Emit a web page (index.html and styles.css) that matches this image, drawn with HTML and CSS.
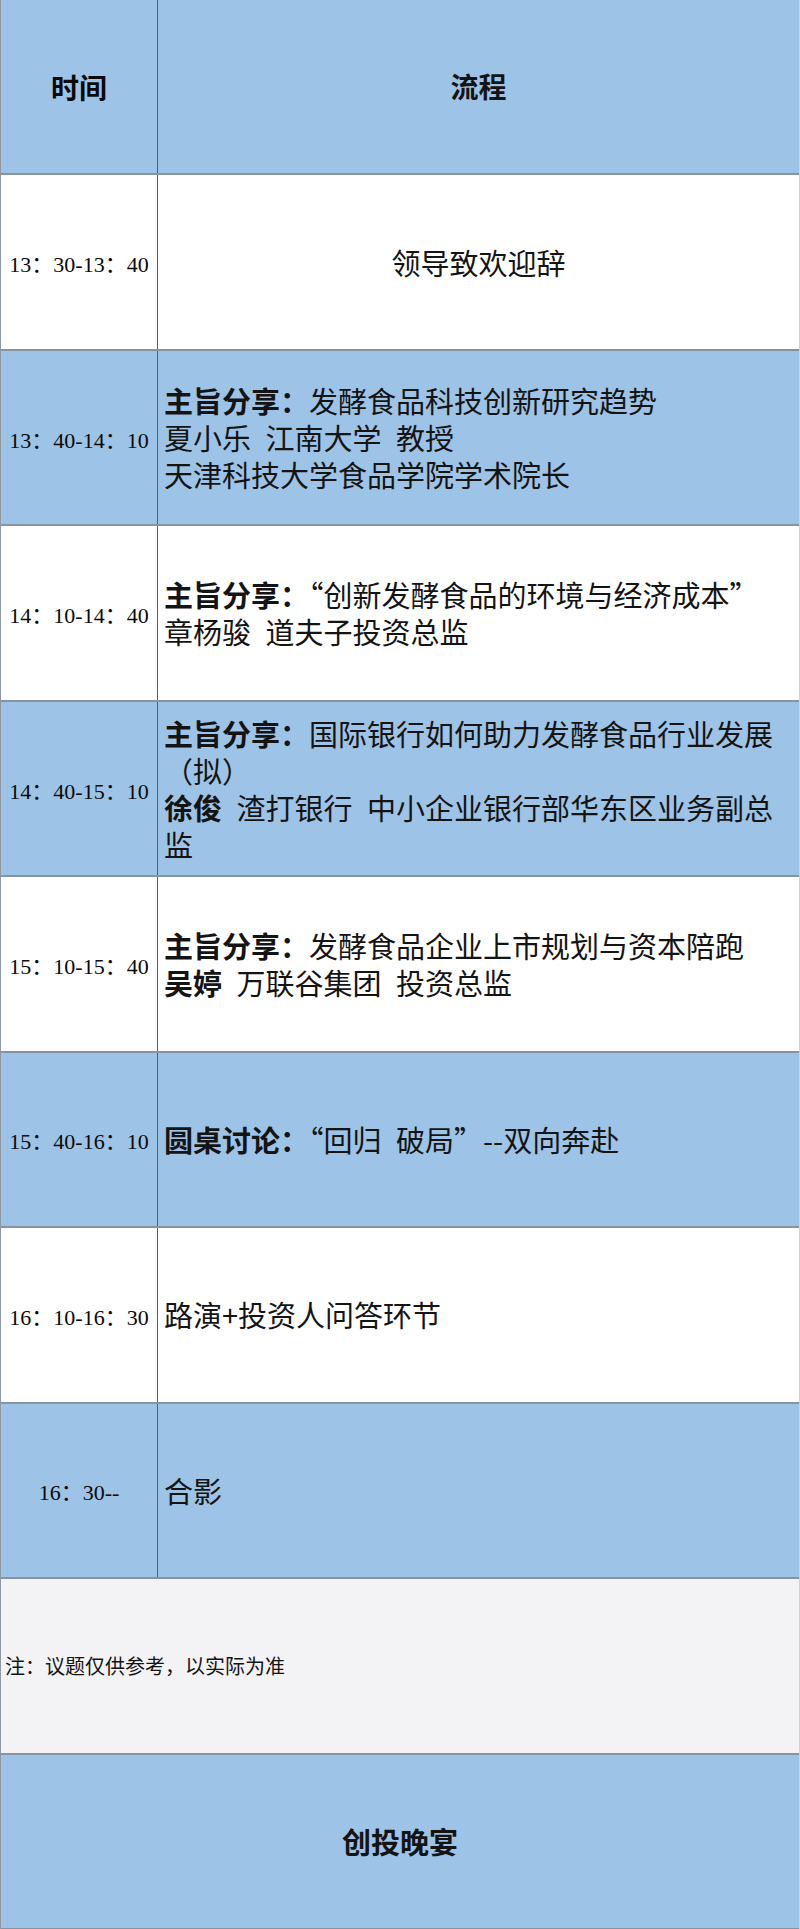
FILE: index.html
```html
<!DOCTYPE html>
<html lang="zh-CN">
<head>
<meta charset="utf-8">
<title>议程</title>
<link rel="stylesheet" href="styles.css">
</head>
<body>
<div class="sheet">
  <div class="row blue head">
    <div class="time"><span class="hd">时间</span></div>
    <div class="flow center"><span class="hd">流程</span></div>
  </div>
  <div class="row white">
    <div class="time">13：30-13：40</div>
    <div class="flow center">领导致欢迎辞</div>
  </div>
  <div class="row blue">
    <div class="time">13：40-14：10</div>
    <div class="flow"><p><b>主旨分享：</b>发酵食品科技创新研究趋势<br>夏小乐&ensp;江南大学&ensp;教授<br>天津科技大学食品学院学术院长</p></div>
  </div>
  <div class="row white">
    <div class="time">14：10-14：40</div>
    <div class="flow"><p><b>主旨分享：</b>“创新发酵食品的环境与经济成本”<br>章杨骏&ensp;道夫子投资总监</p></div>
  </div>
  <div class="row blue">
    <div class="time">14：40-15：10</div>
    <div class="flow"><p><b>主旨分享：</b>国际银行如何助力发酵食品行业发展（拟）<br><b>徐俊</b>&ensp;渣打银行&ensp;中小企业银行部华东区业务副总监</p></div>
  </div>
  <div class="row white">
    <div class="time">15：10-15：40</div>
    <div class="flow"><p><b>主旨分享：</b>发酵食品企业上市规划与资本陪跑<br><b>吴婷</b>&ensp;万联谷集团&ensp;投资总监</p></div>
  </div>
  <div class="row blue">
    <div class="time">15：40-16：10</div>
    <div class="flow"><p><b>圆桌讨论：</b>“回归&ensp;破局”--双向奔赴</p></div>
  </div>
  <div class="row white">
    <div class="time">16：10-16：30</div>
    <div class="flow"><p>路演+投资人问答环节</p></div>
  </div>
  <div class="row blue">
    <div class="time">16：30--</div>
    <div class="flow"><p>合影</p></div>
  </div>
  <div class="row note">
    <div class="note-text">注：议题仅供参考，以实际为准</div>
  </div>
  <div class="row blue full">
    <div class="banquet">创投晚宴</div>
  </div>
</div>
</body>
</html>
```
FILE: styles.css
```css
html, body {
  margin: 0;
  padding: 0;
  background: #ffffff;
}
.sheet {
  width: 800px;
  height: 1929px;
  display: flex;
  flex-direction: column;
  box-sizing: border-box;
  border-left: 1px solid #8e99a5;
  border-right: 1px solid #c9d3dc;
  font-family: "Noto Sans CJK SC", "Liberation Sans", sans-serif;
  color: #141414;
}
.row {
  flex: 1 1 0;
  display: flex;
  box-sizing: border-box;
  border-bottom: 2px solid #8793a0;
  min-height: 0;
}
.row:last-child {
  border-bottom: 1px solid #8793a0;
}
.blue { background: #9dc3e6; }
.white { background: #ffffff; }
.note { background: #f3f2f4; }
.time {
  width: 156px;
  flex: 0 0 156px;
  border-right: 1px solid #555f6b;
  display: flex;
  align-items: center;
  justify-content: center;
  font-family: "Liberation Serif", "Noto Sans CJK SC", serif;
  font-size: 22px;
  color: #0a0a0a;
  white-space: nowrap;
}
.flow {
  flex: 1 1 auto;
  display: flex;
  flex-direction: column;
  justify-content: center;
  padding-left: 6px;
  font-size: 29px;
  line-height: 37px;
}
.flow p {
  margin: 0;
}
.flow b {
  font-weight: 700;
}
.flow.center {
  align-items: center;
  padding-left: 0;
}
.hd {
  font-weight: 700;
  font-size: 28px;
  font-family: "Noto Sans CJK SC", sans-serif;
}
.note-text {
  display: flex;
  align-items: center;
  padding-left: 4px;
  font-size: 20px;
}
.full {
  justify-content: center;
  align-items: center;
}
.banquet {
  font-size: 29px;
  font-weight: 700;
}
```
